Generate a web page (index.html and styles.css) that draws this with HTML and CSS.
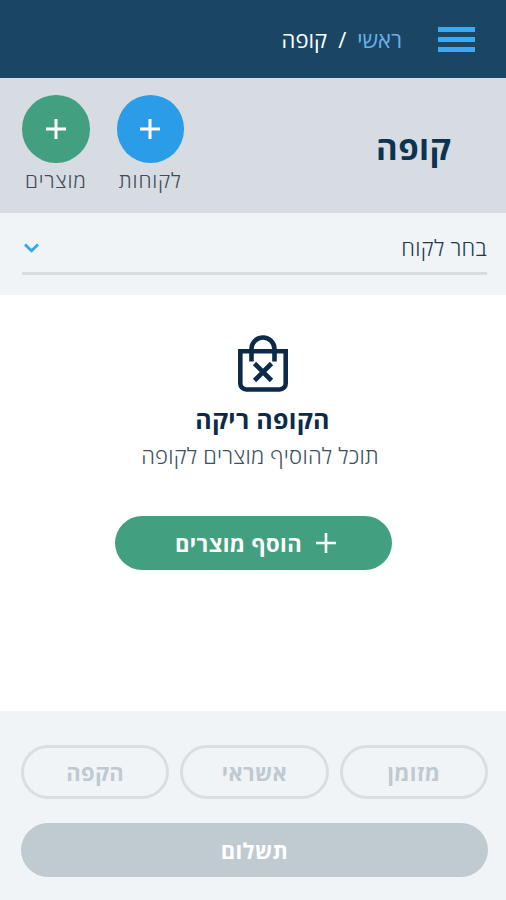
FILE: index.html
```html
<!DOCTYPE html>
<html lang="he" dir="rtl">
<head>
    <meta charset="UTF-8">
    <meta name="viewport" content="width=device-width, initial-scale=1.0">
    <title>קופה</title>
    <link rel="stylesheet" href="styles.css">
</head>
<body>
    <!-- Top bar -->
    <header class="topbar">
        <button class="menu-button" aria-label="תפריט">
            <span></span>
            <span></span>
            <span></span>
        </button>
        <nav class="breadcrumb">
            <a href="#">ראשי</a>
            <span class="separator">/</span>
            <span class="current">קופה</span>
        </nav>
    </header>

    <!-- Page title and shortcuts -->
    <section class="page-head">
        <h1>קופה</h1>
        <div class="shortcuts">
            <div class="shortcut">
                <button class="circle blue" aria-label="לקוחות">
                    <svg width="20" height="20" viewBox="0 0 20 20"><path d="M10 0v20M0 10h20" stroke="#fff" stroke-width="3"/></svg>
                </button>
                <span class="shortcut-label">לקוחות</span>
            </div>
            <div class="shortcut">
                <button class="circle green" aria-label="מוצרים">
                    <svg width="20" height="20" viewBox="0 0 20 20"><path d="M10 0v20M0 10h20" stroke="#fff" stroke-width="3"/></svg>
                </button>
                <span class="shortcut-label">מוצרים</span>
            </div>
        </div>
    </section>

    <!-- Customer select -->
    <section class="customer">
        <div class="customer-select">
            <span>בחר לקוח</span>
            <svg width="16" height="12" viewBox="0 0 16 12" fill="none"><path d="M1 3.500l6.500 6.300L14 3.500" stroke="#32a8f2" stroke-width="2.800"/></svg>
        </div>
    </section>

    <!-- Empty state -->
    <main class="empty">
        <div class="empty-message">
            <svg class="bag" width="50" height="58" viewBox="0 0 50 58" fill="none" stroke="#0c2a4a" stroke-width="4.600">
                <path d="M2.300 16.300h45.400V48.500a6 6 0 0 1-6 6H8.300a6 6 0 0 1-6-6z"/>
                <path d="M13.500 26.500V14a11.500 11.500 0 0 1 23 0v12.500"/>
                <path d="M16.500 28.500l17 17M33.500 28.500l-17 17"/>
            </svg>
            <h2>הקופה ריקה</h2>
            <p>תוכל להוסיף מוצרים לקופה</p>
        </div>
        <button class="add-button">
            <svg width="20" height="20" viewBox="0 0 20 20"><path d="M10 0v20M0 10h20" stroke="#fff" stroke-width="2.600"/></svg>
            <span>הוסף מוצרים</span>
        </button>
    </main>

    <!-- Payment buttons -->
    <footer class="payment">
        <div class="methods">
            <button>מזומן</button>
            <button>אשראי</button>
            <button>הקפה</button>
        </div>
        <button class="pay-button">תשלום</button>
    </footer>
</body>
</html>
```

FILE: styles.css
```css
* {
    box-sizing: border-box;
}

body {
    margin: 0;
    height: 900px;
    display: flex;
    flex-direction: column;
    font-family: "Open Sans", "Noto Sans", "Liberation Sans", sans-serif;
    background-color: #fff;
    color: #0c2a4a;
}

h1, h2, p {
    margin: 0;
}

button {
    padding: 0;
    border: none;
    font-family: inherit;
    cursor: pointer;
}

/* Top bar */
.topbar {
    height: 78px;
    display: flex;
    align-items: center;
    padding: 0 31px;
    gap: 36px;
    background-color: #1a4664;
}

.menu-button {
    width: 37px;
    display: flex;
    flex-direction: column;
    gap: 5px;
    background: none;
}

.menu-button span {
    height: 5px;
    background-color: #3ba9f4;
}

.breadcrumb {
    display: flex;
    gap: 11px;
    font-size: 22px;
    line-height: 30px;
    color: #fff;
}

.breadcrumb a {
    color: #69b1ea;
    text-decoration: none;
}

.breadcrumb .current {
    font-weight: 500;
}

/* Page title and shortcuts */
.page-head {
    height: 135px;
    display: flex;
    justify-content: space-between;
    padding: 17px 55px 0 22px;
    background-color: #d7dce2;
}

h1 {
    padding-top: 29px;
    font-size: 33px;
    line-height: 48px;
    font-weight: 700;
    letter-spacing: 0.4px;
    color: #0c3352;
}

.shortcuts {
    display: flex;
    gap: 27px;
}

.shortcut {
    width: 67.5px;
    display: flex;
    flex-direction: column;
    align-items: center;
}

.circle {
    width: 67.5px;
    height: 67.5px;
    display: flex;
    align-items: center;
    justify-content: center;
    border-radius: 50%;
}

.blue {
    background-color: #2b9ce7;
}

.green {
    background-color: #42a081;
}

.shortcut-label {
    margin-top: 3.5px;
    font-size: 21px;
    line-height: 28px;
    font-weight: 300;
    letter-spacing: 0.8px;
    white-space: nowrap;
    color: #3d4d5d;
}

/* Customer select */
.customer {
    height: 82px;
    padding: 0 19px 0 22px;
    background-color: #f1f4f6;
}

.customer-select {
    height: 62px;
    display: flex;
    align-items: center;
    justify-content: space-between;
    padding: 9px 0 0 2px;
    border-bottom: 3px solid #d6dce0;
    font-size: 22px;
    font-weight: 300;
    letter-spacing: 0.3px;
    color: #1e3a50;
}

/* Empty state */
.empty {
    flex: 1;
    display: flex;
    flex-direction: column;
    align-items: center;
    padding-top: 40px;
}

.empty-message {
    display: flex;
    flex-direction: column;
    align-items: center;
    padding-left: 19px;
}

h2 {
    margin-top: 8px;
    font-size: 25px;
    line-height: 36px;
    font-weight: 700;
    letter-spacing: 0.3px;
}

.empty p {
    margin-right: 5px;
    font-size: 22px;
    line-height: 36px;
    font-weight: 300;
    letter-spacing: 0.25px;
    color: #3d5064;
}

.add-button {
    width: 277px;
    height: 54px;
    margin-top: 43px;
    display: flex;
    align-items: center;
    justify-content: center;
    gap: 14px;
    padding-left: 5px;
    border-radius: 27px;
    background-color: #42a081;
    font-size: 22px;
    font-weight: 700;
    letter-spacing: 0.4px;
    color: #fff;
}

/* Payment buttons */
.payment {
    height: 189px;
    padding: 34px 18px 0 21px;
    background-color: #f1f4f6;
}

.methods {
    display: flex;
    gap: 11px;
}

.methods button {
    flex: 1;
    height: 54px;
    border: 3px solid #d9dfe1;
    border-radius: 27px;
    background: none;
    font-size: 22px;
    font-weight: 700;
    letter-spacing: 0.3px;
    color: #bfc9d1;
}

.pay-button {
    width: 100%;
    height: 54px;
    margin-top: 24px;
    border-radius: 27px;
    background-color: #bfcad1;
    font-size: 22px;
    font-weight: 700;
    letter-spacing: 0.3px;
    color: #fff;
}
```
